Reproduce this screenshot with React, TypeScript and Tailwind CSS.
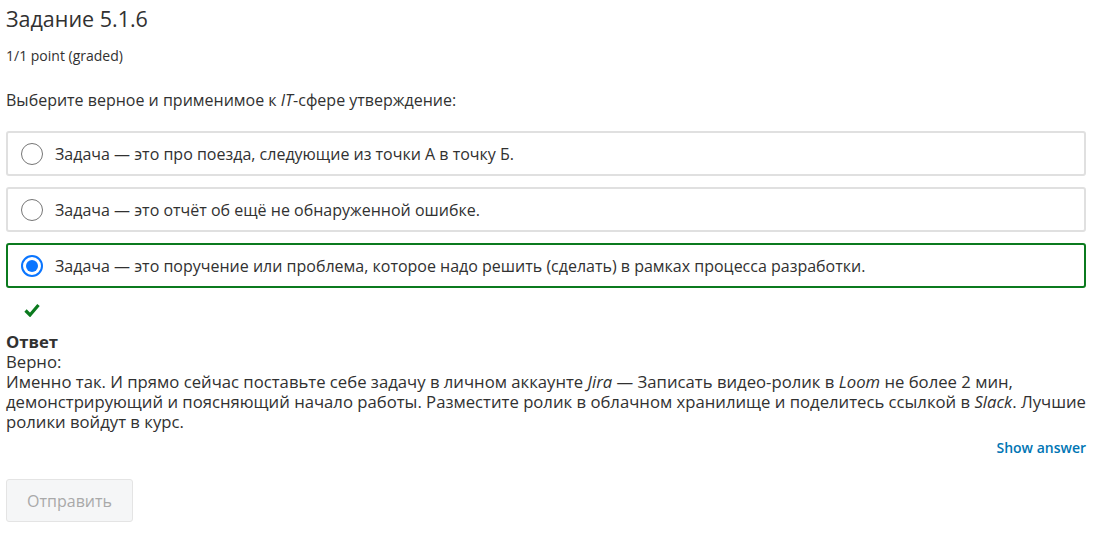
import React from "react";

const options = [
  "Задача — это про поезда, следующие из точки А в точку Б.",
  "Задача — это отчёт об ещё не обнаруженной ошибке.",
  "Задача — это поручение или проблема, которое надо решить (сделать) в рамках процесса разработки.",
];

const Radio = ({ checked }: { checked: boolean }) =>
  checked ? (
    <span className="flex h-[22px] w-[22px] shrink-0 items-center justify-center rounded-full border-2 border-[#0a75ff] bg-white">
      <span className="h-[12px] w-[12px] rounded-full bg-[#0a75ff]" />
    </span>
  ) : (
    <span className="h-[22px] w-[22px] shrink-0 rounded-full border border-[#767676] bg-white" />
  );

export default function App() {
  const selected = 2;

  return (
    <div className="min-h-screen bg-white px-[6px] pt-[5px] text-[#313131] font-['Open_Sans',sans-serif]">
      <h2 className="text-[21.5px] leading-[28px]">Задание 5.1.6</h2>
      <p className="mt-[13px] text-[14px] leading-[20px]">1/1 point (graded)</p>

      <p className="mt-[22px] text-[16px] leading-[24px]">
        Выберите верное и применимое к <em>IT</em>-сфере утверждение:
      </p>

      <div className="mt-[19px] flex w-[1080px] flex-col gap-[11px]">
        {options.map((text, i) => (
          <label
            key={i}
            className={
              i === selected
                ? "flex h-[45px] items-center gap-[12px] rounded-[3px] border-2 border-[#0b7a1e] px-[13px] text-[16px]"
                : "flex h-[45px] items-center gap-[12px] rounded-[3px] border-2 border-[#e0e0e0] px-[13px] text-[16px]"
            }
          >
            <Radio checked={i === selected} />
            <span>{text}</span>
          </label>
        ))}
      </div>

      <div className="mt-[15px] pl-[18px]">
        <svg width="16" height="14" viewBox="0 0 16 14">
          <path d="M1.5 7.5 L6 12 L14.5 2" fill="none" stroke="#0b7a1e" strokeWidth="3.2" />
        </svg>
      </div>

      <div className="mt-[15px] w-[1080px] text-[16.7px] leading-[20px]">
        <p className="font-bold">Ответ</p>
        <p>Верно:</p>
        <p>
          Именно так. И прямо сейчас поставьте себе задачу в личном аккаунте <em>Jira</em> — Записать
          видео-ролик в <em>Loom</em> не более 2 мин, демонстрирующий и поясняющий начало работы.
          Разместите ролик в облачном хранилище и поделитесь ссылкой в <em>Slack</em>. Лучшие ролики
          войдут в курс.
        </p>
      </div>

      <div className="mt-[5px] flex w-[1080px] justify-end">
        <button className="text-[14px] font-semibold text-[#0075b4]">Show answer</button>
      </div>

      <button className="mt-[21px] h-[43px] w-[127px] rounded-[3px] border border-[#e4e4e4] bg-[#f5f6f7] text-[16px] text-[#a9a9a9]">
        Отправить
      </button>
    </div>
  );
}
